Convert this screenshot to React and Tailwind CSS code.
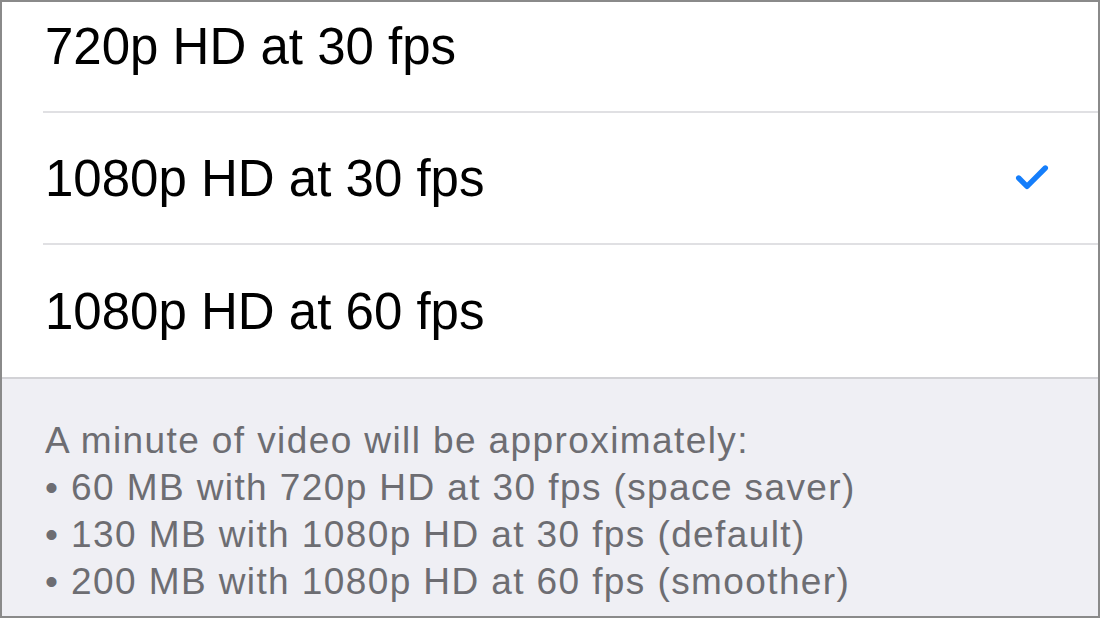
import { Check } from 'lucide-react'

const options = [
  { label: '720p HD at 30 fps', selected: false },
  { label: '1080p HD at 30 fps', selected: true },
  { label: '1080p HD at 60 fps', selected: false },
]

const notes = [
  '60 MB with 720p HD at 30 fps (space saver)',
  '130 MB with 1080p HD at 30 fps (default)',
  '200 MB with 1080p HD at 60 fps (smoother)',
]

export default function App() {
  return (
    <div
      className="flex h-[618px] w-[1100px] flex-col overflow-hidden border-2 border-[#8a8a8a] bg-white"
      style={{ fontFamily: '"Liberation Sans", Arial, sans-serif' }}
    >
      <div className="-mt-[21px] bg-white pl-[41px]">
        {options.map((opt, i) => (
          <div
            key={opt.label}
            className={
              i < options.length - 1
                ? 'flex h-[132px] items-center justify-between border-b-2 border-[#e0e0e3] pr-[46px]'
                : 'flex h-[132px] items-center justify-between pr-[46px]'
            }
          >
            <span className="pl-[2px] text-[51px] leading-none text-black">{opt.label}</span>
            {opt.selected ? <Check className="h-[40px] w-[40px] text-[#157efb]" strokeWidth={3.2} /> : null}
          </div>
        ))}
      </div>
      <div className="flex-1 border-t-2 border-[#d2d2d6] bg-[#efeff4] pl-[43px] pt-[38px] text-[37px] leading-[47px] tracking-[1.4px] text-[#6d6d72]">
        <p>A minute of video will be approximately:</p>
        {notes.map((n) => (
          <p key={n}>• {n}</p>
        ))}
      </div>
    </div>
  )
}
